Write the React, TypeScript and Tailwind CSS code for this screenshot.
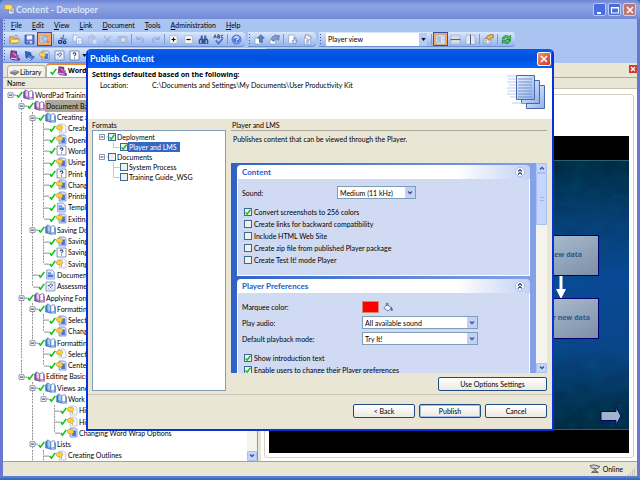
import { useState, type ReactNode } from 'react'

type IconName =
  | 'open' | 'save' | 'preview' | 'cut' | 'copy' | 'paste' | 'delete' | 'camera' | 'undo' | 'redo'
  | 'expand' | 'collapse' | 'find' | 'spell' | 'help' | 'export' | 'checkOut' | 'import' | 'revert'
  | 'viewLeft' | 'viewRows' | 'viewCols' | 'props' | 'refresh' | 'module' | 'section' | 'topic'
  | 'assessment' | 'question' | 'bubble' | 'webPage' | 'moduleNode' | 'sectionNode' | 'library' | 'app'

const bubble = <path d="M2 3.500h6l1.500 1.500v3L8 9.500v3L5 9.500H2L.8 8V5z" fill="#ffcf3a" stroke="#b88a2a" strokeWidth=".8" />

const openBook = (dark: string, mid: string, light: string) => (
  <>
    <path d="M1 4l2-1v9l5 3-1-1-6-1z" fill={mid} stroke={dark} />
    <path d="M3 1.500c3 0 5 2 5.500 4V14C7 12 5 11 3 11z" fill={light} stroke={dark} />
    <path d="M8.500 5C9 3 11 2 14 3v10c-2-1-4-.5-5.500 1z" fill="#fff" stroke={dark} />
    <path d="M15 5v9.500H8" fill="none" stroke={mid} strokeWidth="1.600" />
  </>
)

const icons: Record<IconName, ReactNode> = {
  open: (
    <>
      <path d="M1 13V4h5l1 2h6v7z" fill="#f6c64e" stroke="#a8741c" />
      <path d="M3.500 7.500H16L13 13H1z" fill="#ffe48c" stroke="#b8862c" />
      <path d="M8 3c2-2 4-1 5 1" fill="none" stroke="#44598c" />
    </>
  ),
  save: (
    <>
      <path d="M1.500 1.500h13v13h-12l-1-1z" fill="#5a6fd0" stroke="#2c3a94" />
      <path d="M4 2h8v6H4z" fill="#f2f5ff" />
      <path d="M5 10h7v4H5z" fill="#c9d2ee" />
      <path d="M6 11h2v3H6z" fill="#2c3a94" />
    </>
  ),
  preview: (
    <>
      <path d="M1.500 2.500h8v10h-8z" fill="#cfdcf2" stroke="#9aa9c6" />
      <path d="M3 5h4M3 7h3M3 9h4" stroke="#8fa3cb" />
      <circle cx="9" cy="7" r="4" fill="#b9c9e4" stroke="#7f8fb2" />
      <path d="M11 10h4v3h-3z" fill="#8797b8" />
    </>
  ),
  cut: (
    <>
      <path d="M10 1L7 10M5 6l9 2" stroke="#4a6cb8" strokeWidth="1.600" />
      <circle cx="4.500" cy="11.500" r="2.300" fill="none" stroke="#1c3276" strokeWidth="1.800" />
      <circle cx="11" cy="12" r="2" fill="none" stroke="#1c3276" strokeWidth="1.800" />
    </>
  ),
  copy: (
    <>
      <path d="M1.500 1.500h6l2 2v7h-8z" fill="#eef3fd" stroke="#8da4dc" />
      <path d="M6.500 5.500h6l2 2v7h-8z" fill="#fff" stroke="#7f98d8" />
      <path d="M8 9h5M8 11h5M8 13h3" stroke="#a1b6e6" />
    </>
  ),
  paste: (
    <>
      <path d="M2.500 3.500h9v10h-9z" fill="#bccae6" stroke="#a3b4d8" />
      <path d="M5 1.500h4v3H5z" fill="#cdd6e8" stroke="#a3b4d8" />
      <path d="M7.500 7.500h7v7h-7z" fill="#d3def2" stroke="#a3b4d8" />
    </>
  ),
  delete: <path d="M3 3l10 10M13 3L3 13" stroke="#9dabcf" strokeWidth="1.600" />,
  camera: (
    <>
      <path d="M1.500 3.500h13v9h-13z" fill="#c3d1ec" stroke="#96a9d2" />
      <circle cx="9" cy="8.500" r="3.500" fill="#dbe5f7" stroke="#8ea1cb" />
      <path d="M3 5h3M3 7h2M3 9h2" stroke="#8fa2c9" />
    </>
  ),
  undo: <path d="M3 3v5h5M3 8c3-4 9-3 9 1 0 2-1 3-3 4" fill="none" stroke="#8fabe8" strokeWidth="1.600" />,
  redo: <path d="M13 3v5H8M13 8C10 4 4 5 4 9c0 2 1 3 3 4" fill="none" stroke="#8fabe8" strokeWidth="1.600" />,
  expand: (
    <>
      <path d="M2.500 2.500h11v11h-11z" fill="#f8f8f4" stroke="#a8adb8" />
      <path d="M8 5v6M5 8h6" stroke="#111" strokeWidth="1.800" />
    </>
  ),
  collapse: (
    <>
      <path d="M2.500 2.500h11v11h-11z" fill="#f8f8f4" stroke="#a8adb8" />
      <path d="M5 8h6" stroke="#111" strokeWidth="1.800" />
    </>
  ),
  find: (
    <>
      <path d="M4 2h3v4H4zM9 2h3v4H9z" fill="#3f5fa8" />
      <path d="M3 6h4l1 2v6H1V9zM9 6h4l2 3v5H8V8z" fill="#35528f" />
      <path d="M3 9h2v4H3zM11 9h2v4h-2z" fill="#a9c0ee" />
    </>
  ),
  spell: (
    <>
      <path d="M1 6l2-5 2 5M1.500 4.500h3M7 1v5h2.500V3.500H7h2V1zM15 2h-3v3.500h3" fill="none" stroke="#3a4460" strokeWidth="1.200" />
      <path d="M4 9l4 5 6-7" fill="none" stroke="#4a6ed0" strokeWidth="2.400" />
    </>
  ),
  help: (
    <>
      <circle cx="8" cy="8" r="6.500" fill="#3f70e2" stroke="#2a50b4" />
      <circle cx="8" cy="8" r="5.500" fill="none" stroke="#b8cdf8" strokeWidth=".8" />
      <path d="M5.500 6.500c0-3 5-3 5 0 0 1.500-2.500 1.500-2.500 3M8 11v1.500" fill="none" stroke="#fff" strokeWidth="1.800" />
    </>
  ),
  export: (
    <>
      <path d="M1.500 5.500h9v9h-9z" fill="#fff" stroke="#8c9cc0" />
      <path d="M10 1l5 5h-3v6H8V6H5z" fill="#5784c8" stroke="#31548f" />
    </>
  ),
  checkOut: (
    <>
      <path d="M1.500 8.500h8v6h-8z" fill="#fff" stroke="#8c9cc0" />
      <path d="M4 5l6-4 1 2 4-1-1 7-3-2-4 4-3-2z" fill="#7f9dcc" stroke="#50699c" />
    </>
  ),
  import: (
    <>
      <path d="M2.500 1.500h8v12h-8z" fill="#fff" stroke="#8c9cc0" />
      <path d="M10 6h3v4h2l-4 5-4-5h3z" fill="#e2eaf8" stroke="#546fa6" />
    </>
  ),
  revert: (
    <>
      <path d="M3.500 3.500h9v11h-9z" fill="#fff" stroke="#8c9cc0" />
      <path d="M5 1h4v2h4v4L9 8 5 6z" fill="#f4f5f6" stroke="#7a8598" />
      <path d="M6 10h5M6 12h4" stroke="#555f78" />
    </>
  ),
  viewLeft: (
    <>
      <path d="M1.500 1.500h13v13h-13z" fill="#f6f9ff" stroke="#8ea4cf" />
      <path d="M3 3h6v10H3z" fill="#a9c0ec" />
      <path d="M10 4h3M10 6h3M10 8h3M10 10h3M10 12h3" stroke="#a3b5d6" />
    </>
  ),
  viewRows: (
    <>
      <path d="M1.500 1.500h13v13h-13z" fill="#eef2fa" stroke="#98a2b4" />
      <path d="M1 7h14v2H1z" fill="#5a6478" />
      <path d="M3 4h10M3 12h10" stroke="#9dadca" />
    </>
  ),
  viewCols: (
    <>
      <path d="M1.500 1.500h13v13h-13z" fill="#f4f6fb" stroke="#98a2b4" />
      <path d="M8 1v14" stroke="#4c5a7c" strokeWidth="1.600" />
      <path d="M3 4h3M3 7h3M3 10h3M10 4h3M10 7h3M10 10h3" stroke="#b3bfd6" />
    </>
  ),
  props: (
    <>
      <path d="M1.500 6.500h10v8h-10z" fill="#eef2fb" stroke="#75839d" />
      <path d="M3 9h3M3 12h3M8 9h2M8 12h2" stroke="#5a6a8e" />
      <path d="M5 4l5-3h5v4l-3 1-3 3-4-3z" fill="#e4b945" stroke="#7d6322" />
    </>
  ),
  refresh: (
    <>
      <path d="M2 7c1-5 7-6 10-3l2-2v6H8l2-2C8 4 5 5 5 7z" fill="#46d05a" stroke="#0c7220" />
      <path d="M14 9c-1 5-7 6-10 3l-2 2V9h6l-2 1.500c2 2 5 1 5-1.500z" fill="#46d05a" stroke="#0c7220" />
    </>
  ),
  module: (
    <>
      <path d="M3 1l8 1v9l4 1v3l-11-1-2-2z" fill="#a2399c" stroke="#4d1b58" />
      <path d="M6 4l5 5" stroke="#e9a8e4" strokeWidth="1.500" />
      <path d="M3 12l9 1" stroke="#e9e3ff" strokeWidth="1.500" />
      <path d="M10 7h4v4h-4z" fill="#7c5fd0" />
    </>
  ),
  section: (
    <>
      <path d="M2 2l8 2v9L3 11z" fill="#3f68c4" stroke="#1f3a84" />
      <path d="M6 6l9 4-5 5-6-3z" fill="#5b83da" stroke="#1f3a84" />
      <path d="M5 12l5 2" stroke="#fff" strokeWidth="1.500" />
    </>
  ),
  topic: (
    <>
      <path d="M4.500 1.500h8l2 2v11h-10z" fill="#dfe9ff" stroke="#4f6fc4" />
      <path d="M8 5h5v8H7z" fill="#4876dc" />
      {bubble}
    </>
  ),
  assessment: (
    <>
      <path d="M1.500 1.500h13v13h-13z" fill="#eef3ff" stroke="#5d719f" />
      <path d="M4 7l2-1M6 8c1-5 5-4 5-2 0 2-3 1-3 4M5 11l1 1M10 11l1 1" stroke="#324f94" strokeWidth="1.400" fill="none" />
    </>
  ),
  question: (
    <>
      <path d="M1.500 1.500h13v13h-13z" fill="#fff" stroke="#4f6391" />
      <path d="M6 6c0-2.500 4-2.500 4 0 0 1.500-2 1.500-2 3M8 11v1.500" fill="none" stroke="#26448c" strokeWidth="1.600" />
    </>
  ),
  bubble: (
    <>
      <path d="M4.500 1.500h7l3 3v10h-10z" fill="#f3f6fd" stroke="#a9b9d8" />
      {bubble}
    </>
  ),
  webPage: (
    <>
      <path d="M2.500 1.500h8l3 3v10h-11z" fill="#e6eeff" stroke="#5b79c4" />
      <path d="M4 5h5v2H4zM4 8h8v4H4z" fill="#3f6fd8" />
      <path d="M4 10h8" stroke="#6a90e8" />
    </>
  ),
  moduleNode: openBook('#5d3a86', '#b066c4', '#e6cdee'),
  sectionNode: openBook('#3a6cb8', '#4f86d8', '#a9ccf6'),
  library: (
    <>
      <path d="M1 9l7-3 7 2-6 4z" fill="#c9ccd4" stroke="#5d6270" />
      <path d="M1 9v2l8 3 6-4V8" fill="#848a99" stroke="#4a4f5c" />
    </>
  ),
  app: (
    <>
      <path d="M6.500 4.500h8v10h-8z" fill="#e8eefb" stroke="#5f76b8" />
      <path d="M9 7h4M9 9h4M9 11h4" stroke="#7c93c4" />
      <path d="M2 1h8l2 2v4l-2 1v3L7 8H2L1 7V3z" fill="#ffe066" stroke="#b98e22" />
    </>
  ),
}

function Icon({ name, className = 'size-[11px]' }: { name: IconName; className?: string }) {
  return (
    <svg viewBox="0 0 16 16" className={`shrink-0 ${className}`} aria-hidden="true">
      {icons[name]}
    </svg>
  )
}

function GreenCheck({ className = 'size-[7px]' }: { className?: string }) {
  return (
    <svg viewBox="0 0 8 8" className={`shrink-0 ${className}`} aria-hidden="true">
      <path d="M.8 4.500l2 2.500 4.400-6" fill="none" stroke="#0fc41c" strokeWidth="1.900" />
    </svg>
  )
}

function Handle() {
  return (
    <svg viewBox="0 0 4 12" className="h-[12px] w-[4px] shrink-0" aria-hidden="true">
      <path d="M1.500 1v11" stroke="#3f5f9f" strokeDasharray="1 2" />
    </svg>
  )
}

function Separator() {
  return <span className="mx-px h-[10px] w-px shrink-0 bg-[#7a9ad6]" />
}

function ToolButton({ name, active }: { name: IconName; active?: boolean }) {
  return (
    <button
      aria-label={name}
      className={`flex h-[14px] w-[15px] shrink-0 items-center justify-center ${active ? 'border border-[#3b4f9a] bg-[#f9a963]' : ''}`}
    >
      <Icon name={name} />
    </button>
  )
}

function Strip({ children }: { children: ReactNode }) {
  return (
    <div className="flex h-[15px] shrink-0 items-center rounded-r-sm border-b border-[#6d8fcf] bg-linear-to-b from-[#dbe8fd] to-[#94b4ec] pr-px">
      <Handle />
      {children}
    </div>
  )
}

type Row = {
  guides: string // one char per level: space, | line through, T branch, L last branch
  icon: IconName
  text: string
  open?: boolean
  selected?: boolean
}

const rows: Row[] = [
  { guides: ' ', icon: 'moduleNode', text: 'WordPad Training', open: true },
  { guides: ' T', icon: 'moduleNode', text: 'Document Basics', open: true, selected: true },
  { guides: ' |T', icon: 'sectionNode', text: 'Creating a File', open: true },
  { guides: ' ||T', icon: 'bubble', text: 'Create' },
  { guides: ' ||T', icon: 'topic', text: 'Opening' },
  { guides: ' ||T', icon: 'question', text: 'WordPad' },
  { guides: ' ||T', icon: 'topic', text: 'Using Help' },
  { guides: ' ||T', icon: 'question', text: 'Print Preview' },
  { guides: ' ||T', icon: 'topic', text: 'Changing Setup' },
  { guides: ' ||T', icon: 'topic', text: 'Printing' },
  { guides: ' ||T', icon: 'webPage', text: 'Templates' },
  { guides: ' ||L', icon: 'topic', text: 'Exiting WordPad' },
  { guides: ' |T', icon: 'sectionNode', text: 'Saving Documents', open: true },
  { guides: ' ||T', icon: 'topic', text: 'Saving a Document' },
  { guides: ' ||T', icon: 'question', text: 'Saving Question' },
  { guides: ' ||L', icon: 'bubble', text: 'Saving a Copy' },
  { guides: ' |T', icon: 'webPage', text: 'Document Types' },
  { guides: ' |L', icon: 'assessment', text: 'Assessment' },
  { guides: ' T', icon: 'moduleNode', text: 'Applying Formats', open: true },
  { guides: ' |T', icon: 'sectionNode', text: 'Formatting Text', open: true },
  { guides: ' ||T', icon: 'topic', text: 'Selecting Text' },
  { guides: ' ||L', icon: 'topic', text: 'Changing Fonts' },
  { guides: ' |L', icon: 'sectionNode', text: 'Formatting Paragraphs', open: true },
  { guides: ' | T', icon: 'bubble', text: 'Selecting Paragraphs' },
  { guides: ' | L', icon: 'topic', text: 'Centering Text' },
  { guides: ' L', icon: 'moduleNode', text: 'Editing Basics', open: true },
  { guides: '  T', icon: 'sectionNode', text: 'Views and Options', open: true },
  { guides: '  |L', icon: 'sectionNode', text: 'Work Area', open: true },
  { guides: '  | T', icon: 'bubble', text: 'Hiding the Toolbar' },
  { guides: '  | T', icon: 'bubble', text: 'Hiding the Ruler' },
  { guides: '  | L', icon: 'topic', text: 'Changing Word Wrap Options' },
  { guides: '  T', icon: 'sectionNode', text: 'Lists', open: true },
  { guides: '  |T', icon: 'bubble', text: 'Creating Outlines' },
]

function Guide({ kind, open }: { kind: string; open?: boolean }) {
  return (
    <svg viewBox="0 0 11 12" preserveAspectRatio="none" className="h-full w-[11px] shrink-0" aria-hidden="true">
      {(kind === '|' || kind === 'T') && <path d="M5.500 0v12" stroke="#8c8c8c" strokeDasharray="2 1" />}
      {kind === 'L' && <path d="M5.500 0v6" stroke="#8c8c8c" strokeDasharray="2 1" />}
      {(kind === 'T' || kind === 'L' || open) && <path d="M6 6.500h5" stroke="#8c8c8c" />}
      {open && (
        <>
          <path d="M3 4h5v5H3z" fill="#fff" stroke="#8396b4" />
          <path d="M4 6.500h3" stroke="#222" />
        </>
      )}
    </svg>
  )
}

function TreeRow({ row }: { row: Row }) {
  const last = row.guides.length - 1
  return (
    <li className="flex min-h-0 items-center whitespace-nowrap pl-px">
      {row.guides.split('').map((kind, i) => (
        <Guide key={i} kind={kind} open={i === last && row.open} />
      ))}
      <GreenCheck />
      <Icon name={row.icon} />
      <span className={`flex h-full items-center pl-px ${row.selected ? 'bg-[#aca899]' : ''}`}>{row.text}</span>
    </li>
  )
}

function ScrollArrow({ up }: { up?: boolean }) {
  return (
    <button
      aria-label={up ? 'Scroll up' : 'Scroll down'}
      className="flex h-[10px] w-full shrink-0 items-center justify-center rounded-[1px] border border-[#a9bff0] bg-[#c5d5fb]"
    >
      <svg viewBox="0 0 6 4" className="h-[4px] w-[6px]" aria-hidden="true">
        <path d={up ? 'M1 3.500l2-2 2 2' : 'M1 .5l2 2 2-2'} fill="none" stroke="#3f5686" strokeWidth="1.300" />
      </svg>
    </button>
  )
}

function CheckBox({ id, label, checked = false }: { id: string; label: string; checked?: boolean }) {
  const [on, setOn] = useState(checked)
  return (
    <span className="flex h-[12px] items-center gap-[2px]">
      <CheckSquare id={id} on={on} onChange={setOn} />
      <label htmlFor={id} className="whitespace-nowrap">{label}</label>
    </span>
  )
}

function CheckSquare({ id, on, onChange }: { id: string; on: boolean; onChange: (on: boolean) => void }) {
  return (
    <span className="relative flex size-[8px] shrink-0">
      <input
        id={id}
        type="checkbox"
        checked={on}
        onChange={(e) => onChange(e.target.checked)}
        className="size-[8px] appearance-none border border-[#3d6a94] bg-[#f1f1ec]"
      />
      {on && <GreenCheck className="pointer-events-none absolute inset-px size-[6px]" />}
    </span>
  )
}

function Dropdown({ id, options, className }: { id: string; options: string[]; className: string }) {
  return (
    <span className={`relative flex h-[13px] ${className}`}>
      <select id={id} className="w-full appearance-none border border-[#7f9db9] bg-white pl-[2px] leading-[10px]">
        {options.map((option) => (
          <option key={option}>{option}</option>
        ))}
      </select>
      <span className="pointer-events-none absolute inset-y-px right-px flex w-[10px] items-center justify-center bg-[#c1d2f8]">
        <svg viewBox="0 0 6 4" className="h-[4px] w-[6px]" aria-hidden="true">
          <path d="M1 .5l2 2 2-2" fill="none" stroke="#3f5686" strokeWidth="1.300" />
        </svg>
      </span>
    </span>
  )
}

function Card({ title, children }: { title: string; children: ReactNode }) {
  return (
    <section>
      <h3 className="flex h-[14px] items-center justify-between rounded-t-sm bg-linear-to-r from-white from-75% to-[#c3d1f5] px-[5px] text-[8px] font-bold text-[#215dc6]">
        {title}
        <button aria-label={`Collapse ${title}`}>
          <svg viewBox="0 0 10 10" className="size-[10px]" aria-hidden="true">
            <circle cx="5" cy="5" r="4.500" fill="#fff" stroke="#a9b9dd" />
            <path d="M3 4.500l2-2 2 2M3 7.500l2-2 2 2" fill="none" stroke="#1f3f94" strokeWidth="1.200" />
          </svg>
        </button>
      </h3>
      <div className="border border-t-0 border-white bg-[#d0daf3] px-[4px] pt-[7px] pb-[9px]">{children}</div>
    </section>
  )
}

function DialogButton({ children, className = 'w-[62px]', primary }: { children: ReactNode; className?: string; primary?: boolean }) {
  return (
    <button
      className={`flex h-[14px] items-center justify-center rounded-[2px] border border-[#1f4c80] bg-linear-to-b from-white to-[#ebe9e0] ${className} ${primary ? 'inset-ring inset-ring-[#a3bff0]' : ''}`}
    >
      {children}
    </button>
  )
}

function FormatItem({ id, label, checked = false, child, last, selected }: { id: string; label: string; checked?: boolean; child?: boolean; last?: boolean; selected?: boolean }) {
  const [on, setOn] = useState(checked)
  return (
    <li className="flex h-[10px] items-center">
      <svg viewBox="0 0 11 10" className={`h-[10px] shrink-0 ${child ? 'ml-[11px] w-[11px]' : 'mr-[-1px] w-[11px]'}`} aria-hidden="true">
        {child ? (
          <path d={last ? 'M4.500 0v5.500h6' : 'M4.500 0v10M4.500 5.500h6'} fill="none" stroke="#c9c9c2" />
        ) : (
          <>
            <path d="M1.500 2.500h5v5h-5z" fill="#fff" stroke="#8396b4" />
            <path d="M2.500 5h3" stroke="#444" />
            <path d="M8 5h3" stroke="#c9c9c2" />
          </>
        )}
      </svg>
      <CheckSquare id={id} on={on} onChange={setOn} />
      <label htmlFor={id} className={`flex h-[10px] items-center px-px pr-[3px] ${selected ? 'bg-[#316ac5] text-white' : ''}`}>
        {label}
      </label>
    </li>
  )
}

function PublishDialog() {
  return (
    <div
      role="dialog"
      aria-labelledby="dialog-title"
      className="flex h-[382px] w-[468px] flex-col overflow-hidden rounded-t-[5px] border-2 border-t-0 border-[#0831d9] bg-[#e9e6d6]"
    >
      <header className="flex h-[19px] shrink-0 items-center justify-between bg-linear-to-b from-[#0a5ce8] via-[#0050dd] to-[#0462f6] pr-px pl-[2px]">
        <h2 id="dialog-title" className="font-[Lato,sans-serif] text-[9px] font-bold text-white">Publish Content</h2>
        <button aria-label="Close" className="flex size-[14px] items-center justify-center rounded-[2px] border border-white bg-linear-to-br from-[#f0917a] to-[#c9341a]">
          <svg viewBox="0 0 10 10" className="size-[10px]" aria-hidden="true">
            <path d="M2 2l6 6M8 2L2 8" stroke="#fff" strokeWidth="1.500" />
          </svg>
        </button>
      </header>

      <div className="flex h-[51px] shrink-0 justify-between bg-white pt-[2px] pr-[6px] pl-[4px]">
        <div>
          <p className="font-['Noto_Sans',sans-serif] leading-[10px] font-bold">Settings defaulted based on the following:</p>
          <p className="flex pl-[8px] leading-[10px]">
            <span className="w-[52px]">Location:</span>
            <span>C:\Documents and Settings\My Documents\User Productivity Kit</span>
          </p>
        </div>
        <svg viewBox="0 0 40 36" className="mt-[4px] h-[36px] w-[40px]" aria-hidden="true">
          <defs>
            <linearGradient id="sheet" x1="0" y1="0" x2="1" y2="1">
              <stop offset="0" stopColor="#f2f7ff" />
              <stop offset="1" stopColor="#8fb0ea" />
            </linearGradient>
          </defs>
          <path d="M20.500 11.500h18v23h-18z" fill="url(#sheet)" stroke="#4a68a8" />
          <path d="M15.500 6.500h18v23h-18z" fill="url(#sheet)" stroke="#4a68a8" />
          <path d="M10.500 1.500h18v24h-18z" fill="url(#sheet)" stroke="#4a68a8" />
          <path d="M12 5h14M12 8h14M12 11h14M12 14h14M12 17h14M12 20h14M12 23h14" stroke="#7391cd" />
          <path d="M1 2h9M2 5h8M1 8h9M3 11h7M1 14h9M2 17h8M1 20h9M4 23h6M6 29h14" stroke="#b9cdf2" />
        </svg>
      </div>

      <div className="flex min-h-0 flex-1 gap-[5px] pt-px pr-[5px] pl-[4px]">
        <div className="flex w-[134px] flex-col pb-[3px]">
          <h3 className="leading-[10px]">Formats</h3>
          <ul className="flex-1 border border-[#7f9db9] bg-white py-px pl-[5px]">
            <FormatItem id="deployment" label="Deployment" checked />
            <FormatItem id="player-lms" label="Player and LMS" checked child last selected />
            <FormatItem id="documents" label="Documents" />
            <FormatItem id="system-process" label="System Process" child />
            <FormatItem id="training-guide" label="Training Guide_WSG" child last />
          </ul>
        </div>

        <div className="flex min-w-0 flex-1 flex-col">
          <h3 className="border-b border-[#aca899] pl-px leading-[10px]">Player and LMS</h3>
          <p className="h-[32px] pt-[3px] pl-[2px] leading-[10px]">Publishes content that can be viewed through the Player.</p>

          <div className="flex h-[210px] shrink-0 overflow-hidden">
            <div className="flex flex-1 flex-col gap-[3px] bg-linear-to-r from-[#2f62c8] to-[#84a2e8] pt-[2px] pr-[6px] pl-[6px]">
              <Card title="Content">
                <div className="flex items-center">
                  <label htmlFor="sound" className="w-[95px]">Sound:</label>
                  <Dropdown id="sound" options={['Medium (11 kHz)', 'Low (8 kHz)', 'High (22 kHz)']} className="w-[79px]" />
                </div>
                <div className="mt-[7px] pl-[2px]">
                  <CheckBox id="colors" label="Convert screenshots to 256 colors" checked />
                  <CheckBox id="links" label="Create links for backward compatibility" />
                  <CheckBox id="html" label="Include HTML Web Site" />
                  <CheckBox id="zip" label="Create zip file from published Player package" />
                  <CheckBox id="test-it" label="Create Test It! mode Player" />
                </div>
              </Card>

              <Card title="Player Preferences">
                <div className="grid grid-cols-[120px_1fr] items-center gap-y-[3px]">
                  <span>Marquee color:</span>
                  <span className="flex h-[13px] items-center gap-[4px]">
                    <button aria-label="Marquee color" className="h-[12px] w-[17px] border border-[#d8856f] bg-[#ff0000]" />
                    <svg viewBox="0 0 12 12" className="size-[10px]" aria-hidden="true">
                      <path d="M1 7l4-4 5 4-4 4z" fill="#f2f5fb" stroke="#53638b" />
                      <path d="M4 5V1.500h2V5" fill="none" stroke="#53638b" />
                      <path d="M10 6l1.500 4h-2z" fill="#3c6fc4" stroke="#3c6fc4" />
                    </svg>
                  </span>
                  <label htmlFor="audio">Play audio:</label>
                  <Dropdown id="audio" options={['All available sound', 'No sound']} className="w-[116px]" />
                  <label htmlFor="playback">Default playback mode:</label>
                  <Dropdown id="playback" options={['Try It!', 'See It!', 'Know It?', 'Do It!']} className="w-[116px]" />
                </div>
                <div className="mt-[7px] pl-[2px]">
                  <CheckBox id="intro" label="Show introduction text" checked />
                  <CheckBox id="user-prefs" label="Enable users to change their Player preferences" checked />
                </div>
              </Card>
            </div>
            <div className="flex w-[11px] shrink-0 flex-col bg-[#f4f3ee]">
              <ScrollArrow up />
              <div className="flex h-[52px] w-full items-center justify-center rounded-[1px] border border-[#a9bff0] bg-[#c5d5fb]">
                <span className="h-[4px] w-[4px] border-y border-[#9db4ea]" />
              </div>
              <div className="flex-1" />
              <ScrollArrow />
            </div>
          </div>

          <div className="flex justify-end pt-[4px]">
            <DialogButton className="w-[109px]">Use Options Settings</DialogButton>
          </div>
        </div>
      </div>

      <footer className="flex h-[35px] shrink-0 justify-end gap-[4px] border-t border-[#c9c5b2] pt-[9px] pr-[5px]">
        <DialogButton>&lt; Back</DialogButton>
        <DialogButton primary>Publish</DialogButton>
        <DialogButton>Cancel</DialogButton>
      </footer>
    </div>
  )
}

function MenuBar() {
  const items = ['File', 'Edit', 'View', 'Link', 'Document', 'Tools', 'Administration', 'Help']
  return (
    <nav className="flex h-[12px] items-center">
      <Handle />
      <ul className="flex gap-[10px] pl-[4px]">
        {items.map((item) => (
          <li key={item}>
            <button>
              <u>{item[0]}</u>
              {item.slice(1)}
            </button>
          </li>
        ))}
      </ul>
    </nav>
  )
}

function Toolbars() {
  return (
    <div className="flex flex-col gap-px pt-px">
      <div className="flex gap-[3px]">
        <Strip>
          <ToolButton name="open" />
          <ToolButton name="save" />
          <ToolButton name="preview" active />
          <Separator />
          <ToolButton name="cut" />
          <ToolButton name="copy" />
          <ToolButton name="paste" />
          <ToolButton name="delete" />
          <ToolButton name="camera" />
          <Separator />
          <ToolButton name="undo" />
          <ToolButton name="redo" />
          <Separator />
          <ToolButton name="expand" />
          <ToolButton name="collapse" />
          <ToolButton name="find" />
          <ToolButton name="spell" />
          <Separator />
          <ToolButton name="help" />
        </Strip>
        <Strip>
          <ToolButton name="export" />
          <ToolButton name="checkOut" />
          <Separator />
          <ToolButton name="import" />
          <ToolButton name="revert" />
        </Strip>
        <Strip>
          <span className="relative mr-[3px] ml-[3px] flex h-[13px] w-[101px]">
            <select aria-label="View" className="w-full appearance-none bg-white pl-[2px] leading-[13px]">
              <option>Player view</option>
              <option>Developer view</option>
            </select>
            <span className="pointer-events-none absolute inset-y-0 right-0 flex w-[8px] items-center justify-center bg-[#b4cbf5]">
              <svg viewBox="0 0 6 4" className="h-[3px] w-[5px]" aria-hidden="true">
                <path d="M0 0h6L3 4z" fill="#111" />
              </svg>
            </span>
          </span>
          <Separator />
          <ToolButton name="viewLeft" active />
          <ToolButton name="viewRows" />
          <ToolButton name="viewCols" />
          <Separator />
          <ToolButton name="props" />
          <Separator />
          <ToolButton name="refresh" />
        </Strip>
      </div>
      <div className="flex">
        <Strip>
          <ToolButton name="module" />
          <ToolButton name="section" />
          <ToolButton name="topic" />
          <ToolButton name="assessment" />
          <ToolButton name="question" />
          <svg viewBox="0 0 6 4" className="mr-[180px] h-[3px] w-[5px]" aria-hidden="true">
            <path d="M0 0h6L3 4z" fill="#111" />
          </svg>
        </Strip>
      </div>
    </div>
  )
}

function ConceptSlide() {
  return (
    <div className="relative h-[270px] border-y border-[#2c5f74] bg-[linear-gradient(#00293c,#073d72_22%,#0a4896_45%,#0a4488_70%,#03304f_90%,#00293c)]">
      <svg className="absolute inset-0 size-full opacity-30" aria-hidden="true">
        <filter id="texture">
          <feTurbulence type="fractalNoise" baseFrequency="0.06 0.09" numOctaves="3" seed="4" />
          <feColorMatrix values="0 0 0 0 0  0 0 0 0 0.1  0 0 0 0 0.25  1.600 0 0 0 -0.450" />
        </filter>
        <rect width="100%" height="100%" filter="url(#texture)" />
      </svg>
      <div className="absolute top-[74px] right-[30px] flex h-[41px] w-[80px] items-center justify-end border border-[#000070] bg-linear-to-br from-[#b4c6da] to-[#7d8fa6] pr-[16px] font-['Noto_Sans',sans-serif] font-bold text-[#2f5a8c]">
        View new data
      </div>
      <svg viewBox="0 0 10 23" className="absolute top-[115px] right-[63px] h-[23px] w-[10px]" aria-hidden="true">
        <path d="M3.500 0h3v13H10l-5 10-5-10h3.500z" fill="#fff" />
      </svg>
      <div className="absolute top-[137px] right-[30px] flex h-[41px] w-[80px] items-center justify-end border border-[#000070] bg-linear-to-br from-[#b4c6da] to-[#7d8fa6] pr-[8px] font-['Noto_Sans',sans-serif] font-bold text-[#2f5a8c]">
        Enter new data
      </div>
      <button aria-label="Next" className="absolute right-[7px] bottom-[3px]">
        <svg viewBox="0 0 22 20" className="h-[20px] w-[22px]" aria-hidden="true">
          <path d="M1 5.500h15V1l5 9-5 9v-4.500H1z" fill="#9fb4cb" stroke="#00006c" />
        </svg>
      </button>
    </div>
  )
}

export default function App() {
  return (
    <div className="relative flex h-screen min-h-[480px] flex-col overflow-hidden bg-[#2f6fc0] pb-[2px] font-[Lato,'Noto_Sans',sans-serif] text-[7px] leading-[10px] text-black">
      <div className="flex min-h-0 flex-1 flex-col rounded-t-[5px] border-x-[3px] border-b-2 border-[#6a77d0] bg-[#e9e6d6]">
        <header className="-mx-[3px] flex h-[19px] shrink-0 items-center gap-px rounded-t-[5px] bg-linear-to-b from-[#6f86d6] via-[#8ea5e4] via-30% to-[#7289d6] px-[4px]">
          <Icon name="app" />
          <h1 className="flex-1 font-[Lato,sans-serif] text-[9px] font-bold text-[#dce6fa]">Content - Developer</h1>
          <div className="flex gap-[2px]">
            <button aria-label="Minimize" className="flex size-[13px] items-center justify-center rounded-[2px] border border-[#b9c8f2] bg-[#4a6cdc]">
              <svg viewBox="0 0 10 10" className="size-[10px]" aria-hidden="true">
                <path d="M2 8h4" stroke="#fff" strokeWidth="2" />
              </svg>
            </button>
            <button aria-label="Maximize" className="flex size-[13px] items-center justify-center rounded-[2px] border border-[#b9c8f2] bg-[#4a6cdc]">
              <svg viewBox="0 0 10 10" className="size-[10px]" aria-hidden="true">
                <path d="M1.500 2.500h7v5.500h-7zM1 3h8" fill="none" stroke="#fff" strokeWidth="1.200" />
              </svg>
            </button>
            <button aria-label="Close" className="flex size-[13px] items-center justify-center rounded-[2px] border border-[#d5cfe2] bg-[#bd7670]">
              <svg viewBox="0 0 10 10" className="size-[10px]" aria-hidden="true">
                <path d="M2 2l6 6M8 2L2 8" stroke="#fff" strokeWidth="1.500" />
              </svg>
            </button>
          </div>
        </header>

        <div className="shrink-0 bg-[#a9c4f1]">
          <MenuBar />
          <Toolbars />
        </div>

        <div className="flex h-[15px] shrink-0 items-end border-b border-[#aca899] pl-[4px]">
          <button className="flex h-[12px] w-[39px] items-center gap-px rounded-t-sm border border-b-0 border-[#b5b2a2] bg-[#f3f1e8] pl-[2px]">
            <Icon name="library" className="size-[9px]" />
            Library
          </button>
          <button className="flex h-[14px] items-center rounded-t-sm border border-t-2 border-b-0 border-[#b5b2a2] border-t-[#e68b2c] bg-white px-[3px] font-['Noto_Sans',sans-serif] font-bold">
            <GreenCheck />
            <Icon name="module" className="mr-px size-[10px]" />
            WordPad
          </button>
          <button aria-label="Close tab" className="mb-[4px] ml-auto flex size-[8px] items-center justify-center bg-[#cf3a2a]">
            <svg viewBox="0 0 8 8" className="size-[8px]" aria-hidden="true">
              <path d="M2 2l4 4M6 2L2 6" stroke="#fff" strokeWidth="1.300" />
            </svg>
          </button>
        </div>

        <main className="flex min-h-0 flex-1 border-b border-[#9aa3ad]">
          <div className="flex w-[255px] shrink-0 flex-col border-r border-[#7f9db9] bg-white">
            <div className="flex h-[11px] shrink-0 items-center border-b border-[#c7c3b0] bg-[#ebe9dc] pl-[4px]">Name</div>
            <div className="flex min-h-0 flex-1">
              <ul className="grid min-w-0 flex-1 auto-rows-fr overflow-hidden pl-px">
                {rows.map((row, i) => (
                  <TreeRow key={i} row={row} />
                ))}
              </ul>
              <div className="flex w-[10px] flex-col justify-between bg-[#f4f3ee]">
                <ScrollArrow up />
                <ScrollArrow />
              </div>
            </div>
          </div>
          <div className="flex min-w-0 flex-1 flex-col border-l-[3px] border-[#e9e6d6]">
            <div className="h-[11px] shrink-0 border-b border-[#c7c3b0]" />
            <div className="flex min-h-0 flex-1 bg-white px-[3px] pt-[5px] pb-[3px]">
              <div className="flex flex-1 flex-col rounded-[3px] border border-[#d5d2bf] px-[4px] pt-[41px] pb-[4px]">
                <div className="flex flex-1 flex-col justify-center bg-black">
                  <ConceptSlide />
                </div>
              </div>
            </div>
          </div>
        </main>

        <footer className="flex h-[14px] shrink-0 items-center justify-end gap-[2px] pr-px">
          <svg viewBox="0 0 14 12" className="h-[10px] w-[12px]" aria-hidden="true">
            <path d="M1 2l5-1 7 2-4 3-6-1z" fill="#c9cdd6" stroke="#4c515c" />
            <path d="M7 5v3l4 2H3l3-2" fill="#d9b742" stroke="#3d3d2c" />
          </svg>
          <span>Online</span>
          <svg viewBox="0 0 8 8" className="ml-[3px] size-[8px] self-end" aria-hidden="true">
            <path d="M6 1h1M4 3h1M6 3h1M2 5h1M4 5h1M6 5h1M0 7h1M2 7h1M4 7h1M6 7h1" stroke="#aaa68f" />
          </svg>
        </footer>
      </div>

      <div className="absolute inset-0 flex items-center justify-center">
        <PublishDialog />
      </div>
    </div>
  )
}
